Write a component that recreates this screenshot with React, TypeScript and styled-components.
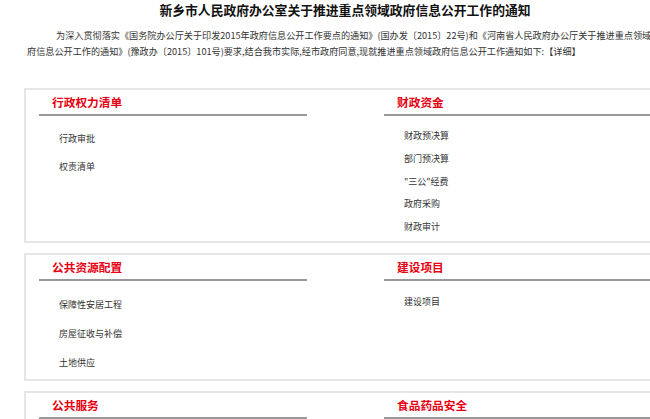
import React from 'react';
import styled, { createGlobalStyle } from 'styled-components';

const GlobalStyle = createGlobalStyle`
  html, body {
    margin: 0;
    padding: 0;
    background: #fff;
    overflow: hidden;
  }
  body {
    font-family: "Noto Sans CJK SC", "Noto Sans", sans-serif;
  }
`;

const Page = styled.div`
  width: 690px;
`;

const Title = styled.h1`
  margin: 0;
  padding-top: 2px;
  font-size: 12.8px;
  line-height: 16px;
  font-weight: bold;
  text-align: center;
  color: #111;
`;

const Intro = styled.p`
  margin: 9px 0 0;
  padding: 0 28px 0 27px;
  font-size: 9.15px;
  line-height: 16px;
  text-indent: 29px;
  color: #333;
`;

const Sections = styled.div`
  margin-top: 29px;
`;

const Box = styled.div`
  display: flex;
  gap: 77px;
  margin: 0 23px 10px 24px;
  padding: 0 13px;
  border: 2px solid #e6e6e6;
`;

const Column = styled.div`
  width: 270px;
`;

const Heading = styled.h2`
  margin: 0;
  height: 24px;
  padding-left: 13px;
  font-size: 11.7px;
  line-height: 23px;
  font-weight: bold;
  color: #e60012;
  border-bottom: 2px solid #999;
`;

const List = styled.ul`
  list-style: none;
  margin: 0;
  padding: 9px 0 2px 20px;
`;

const Item = styled.li<{ $step: number }>`
  height: ${(p) => p.$step}px;
  line-height: ${(p) => p.$step}px;
  font-size: 9px;
  color: #333;
`;

type Col = { title: string; step: number; items: string[] };

const rows: Col[][] = [
  [
    { title: '行政权力清单', step: 28, items: ['行政审批', '权责清单'] },
    {
      title: '财政资金',
      step: 22.8,
      items: ['财政预决算', '部门预决算', '"三公"经费', '政府采购', '财政审计'],
    },
  ],
  [
    { title: '公共资源配置', step: 29, items: ['保障性安居工程', '房屋征收与补偿', '土地供应'] },
    { title: '建设项目', step: 23, items: ['建设项目'] },
  ],
  [
    { title: '公共服务', step: 29, items: ['教育', '医疗卫生'] },
    { title: '食品药品安全', step: 23, items: ['食品安全', '药品安全'] },
  ],
];

const App: React.FC = () => (
  <Page>
    <GlobalStyle />
    <Title>新乡市人民政府办公室关于推进重点领域政府信息公开工作的通知</Title>
    <Intro>
      为深入贯彻落实《国务院办公厅关于印发2015年政府信息公开工作要点的通知》(国办发〔2015〕22号)和《河南省人民政府办公厅关于推进重点领域政府信息公开工作的通知》(豫政办〔2015〕101号)要求,结合我市实际,经市政府同意,现就推进重点领域政府信息公开工作通知如下:【详细】
    </Intro>
    <Sections>
      {rows.map((row) => (
        <Box key={row[0].title}>
          {row.map((col) => (
            <Column key={col.title}>
              <Heading>{col.title}</Heading>
              <List>
                {col.items.map((item) => (
                  <Item key={item} $step={col.step}>
                    {item}
                  </Item>
                ))}
              </List>
            </Column>
          ))}
        </Box>
      ))}
    </Sections>
  </Page>
);

export default App;
